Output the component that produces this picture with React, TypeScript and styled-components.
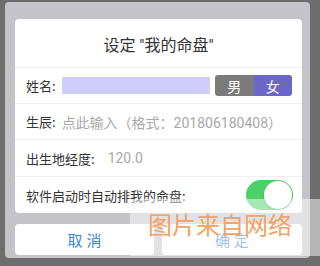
import styled, { createGlobalStyle } from "styled-components";

const Global = createGlobalStyle`
  html, body {
    margin: 0;
    padding: 0;
    background: #6d6d6d;
    width: 320px;
    height: 266px;
    overflow: hidden;
    font-family: "Noto Sans CJK SC", "Noto Sans", sans-serif;
  }
`;

const Screen = styled.div`
  position: relative;
  width: 320px;
  height: 266px;
  padding: 2px 0 0 5px;
  box-sizing: border-box;
`;

const Panel = styled.div`
  width: 305px;
  height: 256px;
  background: #c4c4c8;
  border-radius: 4px;
  padding: 17px 8px 0 10px;
  box-sizing: border-box;
  display: flex;
  flex-direction: column;
`;

const Card = styled.div`
  background: #fff;
  border-radius: 4px;
  display: flex;
  flex-direction: column;
`;

const Title = styled.div`
  height: 49px;
  border-bottom: 1px solid #eeeeee;
  display: flex;
  align-items: center;
  justify-content: center;
  font-family: Roboto, "Noto Sans CJK SC", sans-serif;
  font-size: 16px;
  color: #333;
  padding-top: 2px;
  box-sizing: border-box;
`;

const Row = styled.div<{ $h: number; $last?: boolean }>`
  height: ${(p) => p.$h}px;
  border-bottom: ${(p) => (p.$last ? "none" : "1px solid #efefef")};
  display: flex;
  align-items: center;
  padding: 0 9px 0 11px;
  font-size: 13px;
  color: #333;
`;

const Label = styled.span`
  white-space: nowrap;
`;

const NameInput = styled.div`
  width: 148px;
  height: 17px;
  background: #cfcdf9;
  margin-left: 6px;
`;

const Gender = styled.div`
  display: flex;
  margin-left: 5px;
  height: 21px;
  border-radius: 3px;
  overflow: hidden;
`;

const GenderItem = styled.div<{ $active?: boolean }>`
  width: ${(p) => (p.$active ? 38 : 39)}px;
  background: ${(p) => (p.$active ? "#6b66c9" : "#7b7b7b")};
  color: #fff;
  font-size: 14px;
  display: flex;
  align-items: center;
  justify-content: center;
`;

const Placeholder = styled.span<{ $gap: number }>`
  color: #a8a8a8;
  font-family: Roboto, "Noto Sans CJK SC", sans-serif;
  font-size: 14px;
  margin-left: ${(p) => p.$gap}px;
  white-space: nowrap;
`;

const Switch = styled.div`
  margin-left: auto;
  width: 47px;
  height: 30px;
  border-radius: 15px;
  background: #4cd168;
  position: relative;
`;

const Knob = styled.div`
  position: absolute;
  right: 1px;
  top: 1px;
  width: 28px;
  height: 28px;
  border-radius: 50%;
  background: #fff;
  box-shadow: 0 1px 2px rgba(0, 0, 0, 0.25);
`;

const Buttons = styled.div`
  display: flex;
  gap: 8px;
  margin-top: 11px;
`;

const Button = styled.div<{ $w: number }>`
  width: ${(p) => p.$w}px;
  height: 31px;
  background: #fff;
  border-radius: 4px;
  display: flex;
  align-items: center;
  justify-content: center;
  color: #3d86d6;
  font-size: 15px;
  letter-spacing: 4px;
  text-indent: 4px;
`;

const Watermark = styled.div`
  position: absolute;
  left: 130px;
  top: 199px;
  width: 190px;
  height: 57px;
  background: rgba(255, 255, 255, 0.5);
  color: #f2a262;
  font-size: 24px;
  line-height: 1;
  padding: 13px 0 0 18px;
  box-sizing: border-box;
  white-space: nowrap;
`;

export default function App() {
  return (
    <>
      <Global />
      <Screen>
        <Panel>
          <Card>
            <Title>设定 "我的命盘"</Title>
            <Row $h={35}>
              <Label>姓名:</Label>
              <NameInput />
              <Gender>
                <GenderItem>男</GenderItem>
                <GenderItem $active>女</GenderItem>
              </Gender>
            </Row>
            <Row $h={35}>
              <Label>生辰:</Label>
              <Placeholder $gap={6}>点此输入（格式：201806180408）</Placeholder>
            </Row>
            <Row $h={36}>
              <Label>出生地经度:</Label>
              <Placeholder $gap={13}>120.0</Placeholder>
            </Row>
            <Row $h={36} $last>
              <Label>软件启动时自动排我的命盘:</Label>
              <Switch>
                <Knob />
              </Switch>
            </Row>
          </Card>
          <Buttons>
            <Button $w={139}>取消</Button>
            <Button $w={140}>确定</Button>
          </Buttons>
        </Panel>
        <Watermark>图片来自网络</Watermark>
      </Screen>
    </>
  );
}
